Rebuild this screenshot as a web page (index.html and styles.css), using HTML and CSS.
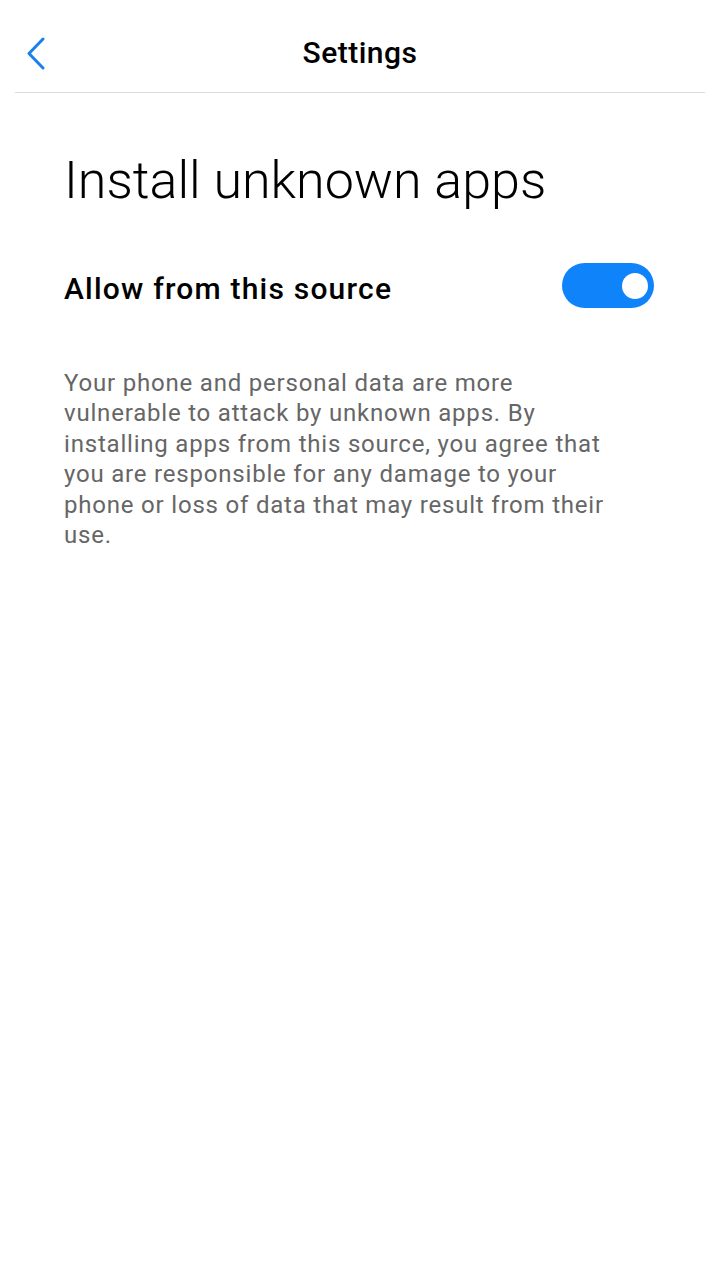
FILE: index.html
```html
<!DOCTYPE html>
<html lang="en">
<head>
  <meta charset="UTF-8" />
  <meta name="viewport" content="width=device-width, initial-scale=1.0"/>
  <title>Settings - Install unknown apps</title>
  <link rel="stylesheet" href="styles.css">
</head>
<body>

  <div class="header">
    <button class="back-btn" aria-label="Back">
      <svg width="24" height="34" viewBox="0 0 24 34">
        <path d="M19 3 L5 17.5 L19 32" fill="none" stroke="#1a80ec" stroke-width="3" stroke-linecap="round" stroke-linejoin="round"/>
      </svg>
    </button>
    <div class="header-title">Settings</div>
    <div></div>
  </div>

  <div class="content">
    <h1>Install unknown apps</h1>

    <div class="setting-row">
      <span class="setting-label">Allow from this source</span>
      <span class="toggle on"><span class="knob"></span></span>
    </div>

    <p class="note">Your phone and personal data are more vulnerable to attack by unknown apps. By installing apps from this source, you agree that you are responsible for any damage to your phone or loss of data that may result from their use.</p>
  </div>

</body>
</html>
```

FILE: styles.css
```css
body {
  margin: 0;
  font-family: Roboto, "Noto Sans", sans-serif;
  background: #fff;
  color: #000;
}
.header {
  display: grid;
  grid-template-columns: 1fr auto 1fr;
  align-items: center;
  margin: 0 15px;
  padding: 32px 0 18px;
  border-bottom: 1px solid #dcdcdc;
}
.back-btn {
  justify-self: start;
  margin-left: 9px;
  padding: 0;
  border: none;
  background: none;
  display: flex;
}
.header-title {
  font-size: 30px;
  font-weight: 500;
  line-height: 42px;
  letter-spacing: 0.5px;
}
.content {
  padding: 58px 64px 0;
}
h1 {
  margin: 0;
  font-size: 52px;
  font-weight: 300;
  line-height: 60px;
}
.setting-row {
  display: flex;
  align-items: flex-start;
  justify-content: space-between;
  margin-top: 52px;
}
.setting-label {
  margin-top: 3px;
  font-size: 30px;
  font-weight: 500;
  line-height: 45px;
  letter-spacing: 1.2px;
}
.toggle {
  width: 92px;
  height: 45px;
  border-radius: 23px;
  background: #0f84fa;
  display: flex;
  align-items: center;
  justify-content: flex-end;
  margin-right: 2px;
}
.knob {
  width: 26px;
  height: 26px;
  border-radius: 50%;
  background: #fff;
  margin-right: 6px;
}
.note {
  max-width: 556px;
  margin: 57px 0 0;
  font-size: 24px;
  line-height: 30.4px;
  letter-spacing: 0.8px;
  color: #666;
}
```
